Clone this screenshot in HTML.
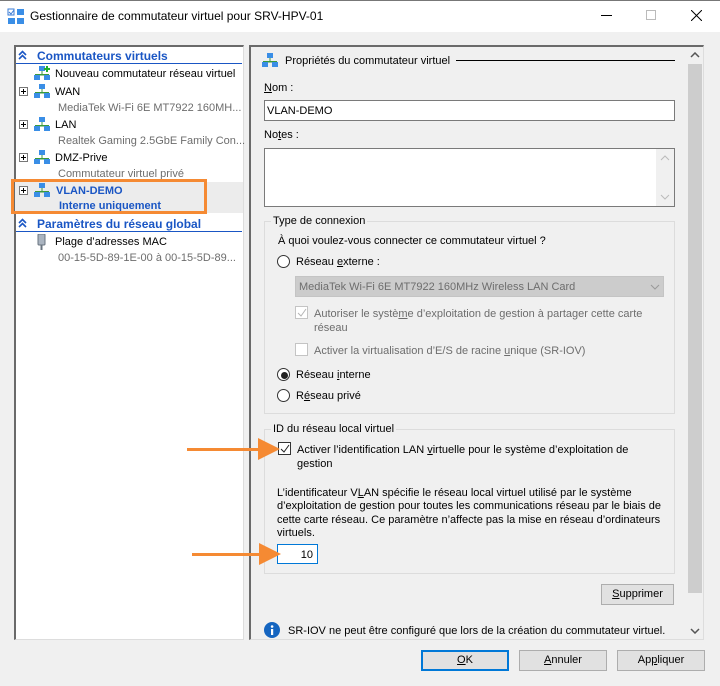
<!DOCTYPE html>
<html><head><meta charset="utf-8"><style>
*{box-sizing:border-box;margin:0;padding:0}
body{width:720px;height:686px;background:#f0f0f0;font-family:"Liberation Sans",sans-serif;font-size:11px;color:#000;position:relative;overflow:hidden}
.a{position:absolute;white-space:nowrap}
.g{color:#6d6d6d}
.b{color:#1a56c4;font-weight:bold}
.btn{position:absolute;background:#e1e1e1;border:1px solid #adadad;text-align:center;line-height:19px;font-size:11px}
u{text-decoration:underline}
.rad{position:absolute;width:13px;height:13px;border:1px solid #333;border-radius:50%;background:#fff}
.chk{position:absolute;width:13px;height:13px;border:1px solid #333;background:#fff}
.pl{position:absolute;width:9px;height:9px;border:1px solid #777;background:#fff}
.pl:before{content:"";position:absolute;left:1px;top:3px;width:5px;height:1px;background:#000}
.pl:after{content:"";position:absolute;left:3px;top:1px;width:1px;height:5px;background:#000}
</style></head><body>
<!-- title bar -->
<div class="a" style="left:0;top:0;width:720px;height:32px;background:#fff;border-top:1px solid #777"></div>
<svg class="a" style="left:7px;top:8px" width="18" height="17"><rect x="1" y="1" width="6" height="6" fill="#fff" stroke="#3a7bd5"/><path d="M2 4l2 2 3-4" stroke="#3a7bd5" fill="none"/><rect x="10" y="1" width="7" height="6" fill="#3a8ee6"/><rect x="1" y="10" width="7" height="6" fill="#3a8ee6"/><rect x="10" y="10" width="7" height="6" fill="#3a8ee6"/></svg>
<div class="a" style="left:30px;top:9px;font-size:12px">Gestionnaire de commutateur virtuel pour SRV-HPV-01</div>
<div class="a" style="left:601px;top:15px;width:11px;height:1px;background:#000"></div>
<div class="a" style="left:646px;top:10px;width:10px;height:10px;border:1px solid #bbb"></div>
<svg class="a" style="left:691px;top:10px" width="11" height="11"><path d="M0 0L11 11M11 0L0 11" stroke="#000"/></svg>

<svg width="0" height="0" style="position:absolute"><defs>
<g id="net"><rect x="5" y="0" width="6" height="5" fill="#3a8ee6"/><rect x="7.5" y="5" width="1" height="3" fill="#3c9a3c"/><rect x="1" y="8" width="14" height="1.5" fill="#3c9a3c"/><rect x="0" y="9" width="6" height="5" fill="#3a8ee6"/><rect x="10" y="9" width="6" height="5" fill="#3a8ee6"/></g>
<g id="chev"><path d="M1 5L4.5 1.5L8 5M1 9L4.5 5.5L8 9" stroke="#1a56c4" stroke-width="1.6" fill="none"/></g>
</defs></svg>

<!-- left pane -->
<div class="a" style="left:14px;top:45px;width:230px;height:595px;background:#fff;border:1px solid #ddd;border-left:2px solid #6a6a6a;border-top:2px solid #6a6a6a;overflow:hidden"></div>
<svg class="a" style="left:18px;top:50px" width="10" height="10"><use href="#chev"/></svg>
<div class="a b" style="left:37px;top:49px;font-size:12px">Commutateurs virtuels</div>
<div class="a" style="left:16px;top:63px;width:226px;height:1px;background:#1a56c4"></div>

<div class="a" style="left:15px;top:182px;width:228px;height:31px;background:#ececec"></div>

<svg class="a" style="left:34px;top:66px" width="18" height="15"><use href="#net"/><path d="M13 0v6M10 3h6" stroke="#1fae2e" stroke-width="2"/></svg>
<div class="a" style="left:55px;top:68px">Nouveau commutateur réseau virtuel</div>

<div class="pl" style="left:19px;top:87px"></div>
<svg class="a" style="left:34px;top:84px" width="18" height="15"><use href="#net"/></svg>
<div class="a" style="left:55px;top:86px">WAN</div>
<div class="a g" style="left:58px;top:102px">MediaTek Wi-Fi 6E MT7922 160MH...</div>

<div class="pl" style="left:19px;top:120px"></div>
<svg class="a" style="left:34px;top:117px" width="18" height="15"><use href="#net"/></svg>
<div class="a" style="left:55px;top:119px">LAN</div>
<div class="a g" style="left:58px;top:135px">Realtek Gaming 2.5GbE Family Con...</div>

<div class="pl" style="left:19px;top:153px"></div>
<svg class="a" style="left:34px;top:150px" width="18" height="15"><use href="#net"/></svg>
<div class="a" style="left:55px;top:152px">DMZ-Prive</div>
<div class="a g" style="left:58px;top:168px">Commutateur virtuel privé</div>

<div class="pl" style="left:19px;top:186px"></div>
<svg class="a" style="left:34px;top:183px" width="18" height="15"><use href="#net"/></svg>
<div class="a b" style="left:56px;top:185px">VLAN-DEMO</div>
<div class="a b" style="left:59px;top:200px">Interne uniquement</div>
<div class="a" style="left:11px;top:179px;width:196px;height:35px;border:3px solid #f58a33"></div>

<svg class="a" style="left:18px;top:218px" width="10" height="10"><use href="#chev"/></svg>
<div class="a b" style="left:37px;top:217px;font-size:12px">Paramètres du réseau global</div>
<div class="a" style="left:16px;top:231px;width:226px;height:1px;background:#1a56c4"></div>
<svg class="a" style="left:37px;top:234px" width="9" height="16"><rect x="1" y="0" width="7" height="11" rx="1" fill="#aab4c0" stroke="#6a7580"/><rect x="3.5" y="11" width="2" height="5" fill="#6a7580"/></svg>
<div class="a" style="left:55px;top:236px">Plage d’adresses MAC</div>
<div class="a g" style="left:58px;top:252px">00-15-5D-89-1E-00 à 00-15-5D-89...</div>

<!-- right pane -->
<div class="a" style="left:249px;top:45px;width:455px;height:595px;background:#f0f0f0;border:1px solid #ddd;border-left:2px solid #6a6a6a;border-top:2px solid #6a6a6a"></div>
<div class="a" style="left:686px;top:47px;width:17px;height:592px;background:#f0f0f0"></div>
<div class="a" style="left:688px;top:64px;width:14px;height:529px;background:#cdcdcd"></div>
<svg class="a" style="left:690px;top:52px" width="10" height="6"><path d="M1 5L5 1L9 5" stroke="#555" stroke-width="1.5" fill="none"/></svg>
<svg class="a" style="left:690px;top:628px" width="10" height="6"><path d="M1 1L5 5L9 1" stroke="#555" stroke-width="1.5" fill="none"/></svg>

<svg class="a" style="left:262px;top:53px" width="18" height="15"><use href="#net"/></svg>
<div class="a" style="left:285px;top:55px;font-size:11px">Propriétés du commutateur virtuel</div>
<div class="a" style="left:456px;top:60px;width:219px;height:1px;background:#000"></div>

<div class="a" style="left:264px;top:82px"><u>N</u>om :</div>
<div class="a" style="left:264px;top:100px;width:411px;height:21px;background:#fff;border:1px solid #7a7a7a;padding:4px 2px">VLAN-DEMO</div>
<div class="a" style="left:264px;top:129px">No<u>t</u>es :</div>
<div class="a" style="left:264px;top:148px;width:411px;height:59px;background:#fff;border:1px solid #7a7a7a"></div>
<div class="a" style="left:656px;top:149px;width:18px;height:57px;background:#f0f0f0"></div>
<svg class="a" style="left:660px;top:155px" width="10" height="6"><path d="M1 5L5 1L9 5" stroke="#bbb" fill="none"/></svg>
<svg class="a" style="left:660px;top:194px" width="10" height="6"><path d="M1 1L5 5L9 1" stroke="#bbb" fill="none"/></svg>

<div class="a" style="left:264px;top:221px;width:411px;height:193px;border:1px solid #dcdcdc"></div>
<div class="a" style="left:271px;top:215px;background:#f0f0f0;padding:0 2px">Type de connexion</div>
<div class="a" style="left:278px;top:235px">À quoi voulez-vous connecter ce commutateur virtuel ?</div>
<div class="rad" style="left:277px;top:255px"></div>
<div class="a" style="left:296px;top:256px">Réseau <u>e</u>xterne :</div>
<div class="a" style="left:295px;top:276px;width:369px;height:21px;background:#cccccc;border:1px solid #c4c4c4;color:#6d6d6d;padding:4px 3px">MediaTek Wi-Fi 6E MT7922 160MHz Wireless LAN Card</div>
<svg class="a" style="left:650px;top:284px" width="10" height="6"><path d="M1 1L5 5L9 1" stroke="#999" fill="none"/></svg>
<div class="chk" style="left:295px;top:306px;border-color:#c4c4c4"></div>
<svg class="a" style="left:297px;top:308px" width="10" height="10"><path d="M1 5l3 3 5-7" stroke="#b5b5b5" fill="none"/></svg>
<div class="a g" style="left:314px;top:307px;line-height:14px">Autoriser le systè<u>m</u>e d’exploitation de gestion à partager cette carte<br>réseau</div>
<div class="chk" style="left:295px;top:343px;border-color:#c4c4c4"></div>
<div class="a g" style="left:314px;top:345px">Activer la virtualisation d’E/S de racine <u>u</u>nique (SR-IOV)</div>
<div class="rad" style="left:277px;top:368px"></div>
<div class="a" style="left:281px;top:372px;width:7px;height:7px;border-radius:50%;background:#222"></div>
<div class="a" style="left:296px;top:369px">Réseau <u>i</u>nterne</div>
<div class="rad" style="left:277px;top:389px"></div>
<div class="a" style="left:296px;top:390px">R<u>é</u>seau privé</div>

<div class="a" style="left:264px;top:429px;width:411px;height:145px;border:1px solid #dcdcdc"></div>
<div class="a" style="left:271px;top:423px;background:#f0f0f0;padding:0 2px">ID du réseau local virtuel</div>
<div class="chk" style="left:278px;top:442px"></div>
<svg class="a" style="left:280px;top:444px" width="10" height="10"><path d="M1 5l3 3 5-7" stroke="#222" fill="none"/></svg>
<div class="a" style="left:297px;top:443px;line-height:14px">Activer l’identification LAN <u>v</u>irtuelle pour le système d’exploitation de<br>gestion</div>
<div class="a" style="left:277px;top:487px;line-height:13.3px">L’identificateur V<u>L</u>AN spécifie le réseau local virtuel utilisé par le système<br>d’exploitation de gestion pour toutes les communications réseau par le biais de<br>cette carte réseau. Ce paramètre n’affecte pas la mise en réseau d’ordinateurs<br>virtuels.</div>
<div class="a" style="left:277px;top:544px;width:41px;height:20px;background:#fff;border:1px solid #0078d7;text-align:right;padding:4px 4px 0 0">10</div>

<!-- arrows -->
<div class="a" style="left:187px;top:448px;width:80px;height:3px;background:#f58a33"></div>
<svg class="a" style="left:258px;top:438px" width="22" height="22"><path d="M0 0L22 11L0 22Z" fill="#f58a33"/></svg>
<div class="a" style="left:192px;top:553px;width:78px;height:3px;background:#f58a33"></div>
<svg class="a" style="left:259px;top:543px" width="22" height="22"><path d="M0 0L22 11L0 22Z" fill="#f58a33"/></svg>

<div class="btn" style="left:601px;top:584px;width:73px;height:21px"><u>S</u>upprimer</div>

<svg class="a" style="left:264px;top:622px" width="16" height="16"><circle cx="8" cy="8" r="8" fill="#1565c0"/><rect x="7" y="7" width="2.2" height="6" fill="#fff"/><circle cx="8.1" cy="4.5" r="1.3" fill="#fff"/></svg>
<div class="a" style="left:288px;top:625px">SR-IOV ne peut être configuré que lors de la création du commutateur virtuel.</div>

<div class="btn" style="left:421px;top:650px;width:88px;height:21px;border:2px solid #0078d7;line-height:17px"><u>O</u>K</div>
<div class="btn" style="left:519px;top:650px;width:88px;height:21px"><u>A</u>nnuler</div>
<div class="btn" style="left:617px;top:650px;width:88px;height:21px">Ap<u>p</u>liquer</div>
</body></html>
